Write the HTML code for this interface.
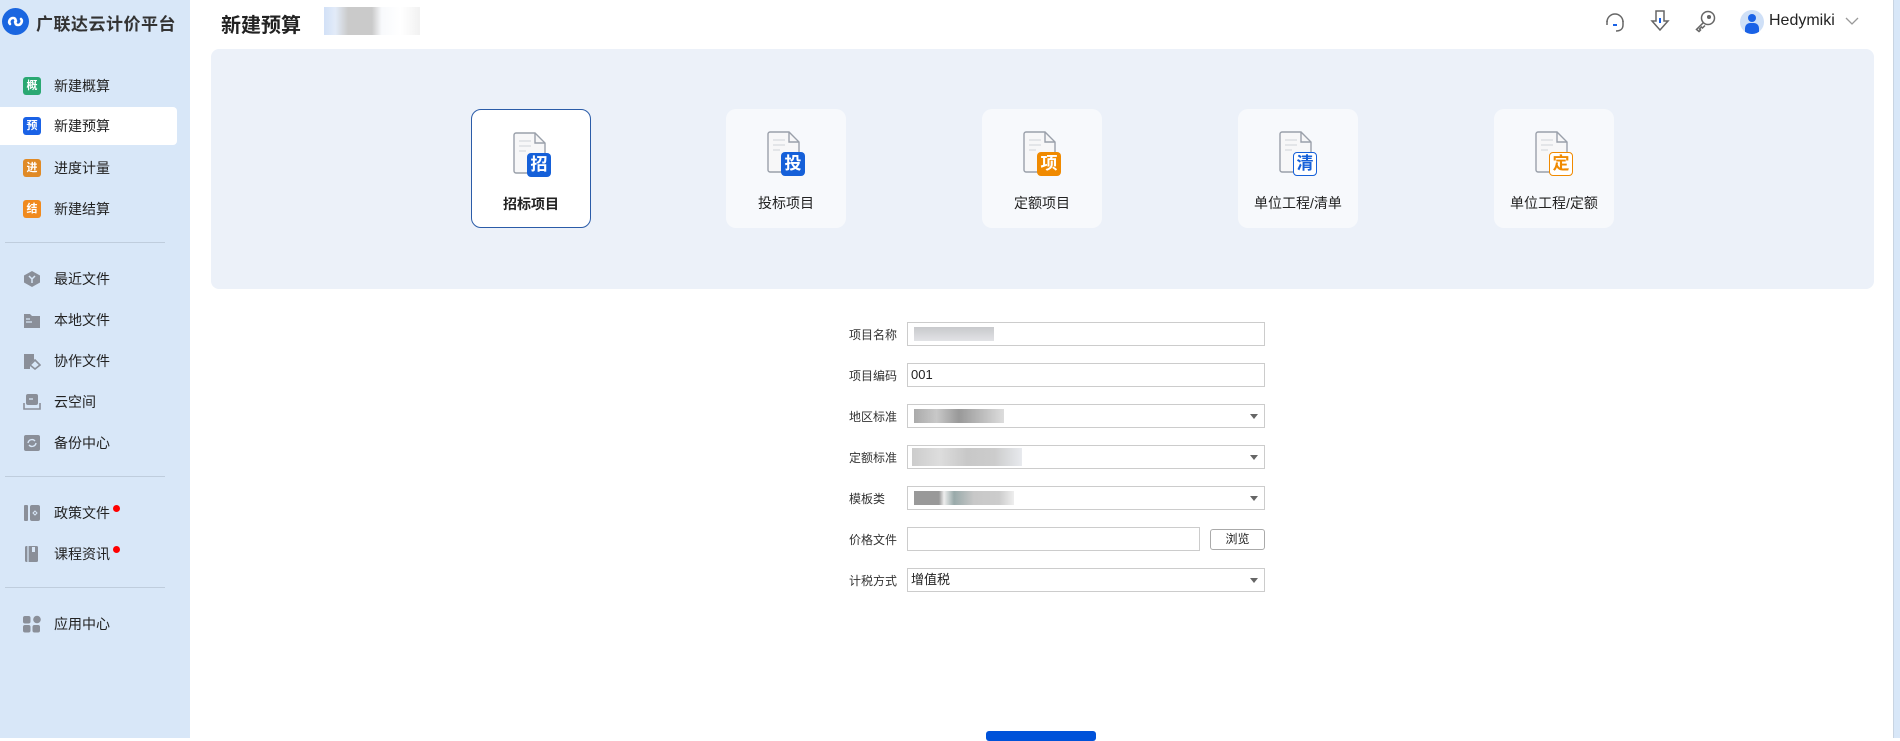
<!DOCTYPE html>
<html><head><meta charset="utf-8">
<style>
*{margin:0;padding:0;box-sizing:border-box}
body{width:1900px;height:738px;overflow:hidden;background:#fff;font-family:"Liberation Sans","Noto Sans CJK SC",sans-serif;position:relative;color:#222}
.abs{position:absolute}
#side{left:0;top:0;width:190px;height:738px;background:#d8e7f8}
.logo{left:2px;top:8px;width:27px;height:27px;border-radius:50%;background:#1a66e0}
.brand{left:36px;top:10px;font-size:17px;font-weight:bold;color:#333;letter-spacing:0.5px}
.mi{position:absolute;left:0;width:177px;height:38px;display:flex;align-items:center}
.mi .ic{position:absolute;left:23px;width:18px;height:18px;border-radius:3px;color:#fff;font-size:11px;font-weight:bold;text-align:center;line-height:18px}
.mi .tx{position:absolute;left:54px;font-size:14px;color:#222}
.mi svg{position:absolute;left:23px}
.dot{position:absolute;width:7px;height:7px;border-radius:50%;background:#f00}
.div{position:absolute;left:5px;width:160px;height:1px;background:#bfcddd}
.title{left:221px;top:9px;font-size:20px;font-weight:bold;color:#222}
.blur{left:324px;top:7px;width:96px;height:28px;background:linear-gradient(90deg,#c7d9f5 0,#dbe6f6 12%,#bdbdbd 25%,#bdbdbd 50%,#f6f8fb 60%,#fff 80%,#eee 100%);opacity:.8}
#panel{left:211px;top:49px;width:1663px;height:240px;background:#ecf1f9;border-radius:8px}
.card{position:absolute;top:109px;width:120px;height:119px;border-radius:10px;background:#f7f9fc}
.card.act{background:#fff;border:1px solid #2b5ca8}
.card svg{position:absolute;left:41px;top:22px}
.badge{position:absolute;left:55px;top:43px;width:24px;height:24px;border-radius:4px;font-size:17px;font-weight:bold;text-align:center;line-height:24px}
.lab{position:absolute;left:0;width:100%;top:84px;text-align:center;font-size:14px;color:#222}
.row{position:absolute;left:849px;height:24px}
.row .l{position:absolute;left:0;top:4px;font-size:12px;color:#333;white-space:nowrap}
.inp{position:absolute;left:907px;width:358px;height:24px;border:1px solid #ccc;background:#fff;font-size:13px;line-height:22px;padding-left:3px}
.arr{position:absolute;right:6px;top:9px;width:0;height:0;border-left:4px solid transparent;border-right:4px solid transparent;border-top:5px solid #666}
.pix{position:absolute;top:4px;height:14px}
</style></head><body>
<div id="side" class="abs"></div>
<div class="abs logo"><svg width="27" height="27" viewBox="0 0 27 27"><path d="M8 16c-2-2 0-6 3-6s3 3 2 4M19 11c2 2 0 6-3 6s-3-3-2-4" stroke="#fff" stroke-width="2.6" fill="none" stroke-linecap="round"/></svg></div>
<div class="abs brand">广联达云计价平台</div>

<div class="mi" style="top:67px"><div class="ic" style="background:#2aa872">概</div><div class="tx">新建概算</div></div>
<div class="mi" style="top:107px;background:#fff;border-radius:0 4px 4px 0"><div class="ic" style="background:#1a62e6">预</div><div class="tx">新建预算</div></div>
<div class="mi" style="top:149px"><div class="ic" style="background:#e08a26">进</div><div class="tx">进度计量</div></div>
<div class="mi" style="top:190px"><div class="ic" style="background:#f08a1e">结</div><div class="tx">新建结算</div></div>
<div class="div" style="top:242px"></div>
<div class="mi" style="top:260px"><svg width="18" height="18"><path d="M9 1l8 4.5v7L9 17 1 12.5v-7z" fill="#8a8f99"/><path d="M6 6l3 3 3-3M9 9v4" stroke="#d8e7f8" stroke-width="1.5" fill="none"/></svg><div class="tx">最近文件</div></div>
<div class="mi" style="top:301px"><svg width="18" height="18"><path d="M1 3h6l2 2h8v12H1z" fill="#8a8f99"/><path d="M3 8h4M3 11h6" stroke="#d8e7f8" stroke-width="1.3"/></svg><div class="tx">本地文件</div></div>
<div class="mi" style="top:342px"><svg width="18" height="18"><path d="M1 2h10v6l-4 4v5H1z" fill="#8a8f99"/><path d="M12 8l5 5-5 4-5-4z" fill="none" stroke="#8a8f99" stroke-width="1.6"/></svg><div class="tx">协作文件</div></div>
<div class="mi" style="top:383px"><svg width="18" height="18"><rect x="3" y="1" width="12" height="11" rx="2" fill="#8a8f99"/><path d="M1 10v6h16v-6" fill="none" stroke="#8a8f99" stroke-width="1.6"/><path d="M6 6h4" stroke="#d8e7f8" stroke-width="1.3"/></svg><div class="tx">云空间</div></div>
<div class="mi" style="top:424px"><svg width="18" height="18"><rect x="1" y="1" width="16" height="16" rx="2" fill="#8a8f99"/><path d="M5 9a4 4 0 0 1 7-2M13 9a4 4 0 0 1-7 2" stroke="#d8e7f8" stroke-width="1.4" fill="none"/></svg><div class="tx">备份中心</div></div>
<div class="div" style="top:476px"></div>
<div class="mi" style="top:494px"><svg width="18" height="18"><rect x="1" y="1" width="4" height="16" rx="1" fill="#8a8f99"/><rect x="7" y="1" width="10" height="16" rx="2" fill="#8a8f99"/><path d="M12 7l2 2-2 2-2-2z" stroke="#d8e7f8" fill="none"/></svg><div class="tx">政策文件</div></div>
<div class="dot" style="left:113px;top:505px"></div>
<div class="mi" style="top:535px"><svg width="18" height="18"><rect x="2" y="1" width="13" height="16" rx="1.5" fill="#8a8f99"/><path d="M5 1v16" stroke="#d8e7f8" stroke-width="1.2"/><rect x="9" y="2" width="3" height="5" fill="#d8e7f8"/></svg><div class="tx">课程资讯</div></div>
<div class="dot" style="left:113px;top:546px"></div>
<div class="div" style="top:587px"></div>
<div class="mi" style="top:605px"><svg width="18" height="18"><rect x="0" y="1" width="7.5" height="7.5" rx="2" fill="#8a8f99"/><circle cx="14" cy="4.5" r="3.8" fill="#8a8f99"/><rect x="0" y="10" width="7.5" height="7.5" rx="2" fill="#8a8f99"/><rect x="9.5" y="10" width="7.5" height="7.5" rx="2" fill="#8a8f99"/></svg><div class="tx">应用中心</div></div>

<div class="abs title">新建预算</div>
<div class="abs blur"></div>

<svg class="abs" style="left:1603px;top:10px" width="24" height="24" viewBox="0 0 24 24" fill="none" stroke="#666" stroke-width="1.5"><path d="M4 12a8 8 0 0 1 16 0"/><path d="M4 11v4M20 11v4"/><path d="M20 15c0 4-3 6-7 6"/><path d="M10 15h4" stroke="#1a62e6" stroke-width="2"/></svg>
<svg class="abs" style="left:1649px;top:9px" width="22" height="24" viewBox="0 0 22 24" fill="none" stroke="#666" stroke-width="1.5"><path d="M7 2h8v10h4l-8 9-8-9h4z"/><path d="M11 9v5" stroke="#1a62e6" stroke-width="2"/></svg>
<svg class="abs" style="left:1693px;top:9px" width="24" height="24" viewBox="0 0 24 24" fill="none" stroke="#666" stroke-width="1.5"><circle cx="15" cy="9" r="6.5"/><circle cx="16" cy="8" r="1.3" fill="#666"/><path d="M10.5 13.5l-7 7 2.5 2 1.5-1.5-1-1 2-2 1 1 2.5-2.5"/></svg>
<div class="abs" style="left:1740px;top:10px;width:24px;height:24px;border-radius:50%;background:#cfe0f7;overflow:hidden"><div class="abs" style="left:8px;top:4px;width:8px;height:8px;border-radius:50%;background:#1a62e6"></div><div class="abs" style="left:5px;top:13px;width:14px;height:12px;border-radius:5px 5px 0 0;background:#1a62e6"></div></div>
<div class="abs" style="left:1769px;top:12px;font-size:16px;color:#222">Hedymiki</div>
<svg class="abs" style="left:1845px;top:17px" width="14" height="9"><path d="M1 1l6 6 6-6" stroke="#999" stroke-width="1.3" fill="none"/></svg>

<div id="panel" class="abs"></div>
<div class="card act" style="left:471px"><svg width="33" height="42"><path d="M3 1h19l10 10v28a2 2 0 0 1-2 2H3a2 2 0 0 1-2-2V3a2 2 0 0 1 2-2z" fill="#f7f7f8" stroke="#9aa0aa" stroke-width="1.4"/><path d="M22 1v10h10" fill="none" stroke="#9aa0aa" stroke-width="1.4"/><path d="M6 9h12M6 14h12M6 19h7" stroke="#e3e5e8" stroke-width="2"/></svg><div class="badge" style="background:#1560d9;color:#fff">招</div><div class="lab" style="font-weight:bold">招标项目</div></div>
<div class="card" style="left:726px"><svg width="33" height="42"><path d="M3 1h19l10 10v28a2 2 0 0 1-2 2H3a2 2 0 0 1-2-2V3a2 2 0 0 1 2-2z" fill="#f7f7f8" stroke="#9aa0aa" stroke-width="1.4"/><path d="M22 1v10h10" fill="none" stroke="#9aa0aa" stroke-width="1.4"/><path d="M6 9h12M6 14h12M6 19h7" stroke="#e3e5e8" stroke-width="2"/></svg><div class="badge" style="background:#1560d9;color:#fff">投</div><div class="lab">投标项目</div></div>
<div class="card" style="left:982px"><svg width="33" height="42"><path d="M3 1h19l10 10v28a2 2 0 0 1-2 2H3a2 2 0 0 1-2-2V3a2 2 0 0 1 2-2z" fill="#f7f7f8" stroke="#9aa0aa" stroke-width="1.4"/><path d="M22 1v10h10" fill="none" stroke="#9aa0aa" stroke-width="1.4"/><path d="M6 9h12M6 14h12M6 19h7" stroke="#e3e5e8" stroke-width="2"/></svg><div class="badge" style="background:#f08a00;color:#fff">项</div><div class="lab">定额项目</div></div>
<div class="card" style="left:1238px"><svg width="33" height="42"><path d="M3 1h19l10 10v28a2 2 0 0 1-2 2H3a2 2 0 0 1-2-2V3a2 2 0 0 1 2-2z" fill="#f7f7f8" stroke="#9aa0aa" stroke-width="1.4"/><path d="M22 1v10h10" fill="none" stroke="#9aa0aa" stroke-width="1.4"/><path d="M6 9h12M6 14h12M6 19h7" stroke="#e3e5e8" stroke-width="2"/></svg><div class="badge" style="background:#fff;color:#1560d9;border:1.5px solid #1560d9;line-height:21px">清</div><div class="lab">单位工程/清单</div></div>
<div class="card" style="left:1494px"><svg width="33" height="42"><path d="M3 1h19l10 10v28a2 2 0 0 1-2 2H3a2 2 0 0 1-2-2V3a2 2 0 0 1 2-2z" fill="#f7f7f8" stroke="#9aa0aa" stroke-width="1.4"/><path d="M22 1v10h10" fill="none" stroke="#9aa0aa" stroke-width="1.4"/><path d="M6 9h12M6 14h12M6 19h7" stroke="#e3e5e8" stroke-width="2"/></svg><div class="badge" style="background:#fff;color:#f08a00;border:1.5px solid #f08a00;line-height:21px">定</div><div class="lab">单位工程/定额</div></div>

<div class="row" style="top:322px"><div class="l">项目名称</div></div>
<div class="inp" style="top:322px"><div class="pix" style="left:6px;width:80px;background:linear-gradient(#c8c9cc,#e2e3e6)"></div></div>
<div class="row" style="top:363px"><div class="l">项目编码</div></div>
<div class="inp" style="top:363px">001</div>
<div class="row" style="top:404px"><div class="l">地区标准</div></div>
<div class="inp" style="top:404px"><div class="pix" style="left:6px;width:90px;background:linear-gradient(90deg,#aaa,#c8c8c8,#999,#bbb,#ddd)"></div><div class="arr"></div></div>
<div class="row" style="top:445px"><div class="l">定额标准</div></div>
<div class="inp" style="top:445px"><div class="pix" style="left:4px;width:110px;height:18px;top:2px;background:linear-gradient(90deg,#ccc,#ddd,#c8c8c8,#ccc,#e8eaee)"></div><div class="arr"></div></div>
<div class="row" style="top:486px"><div class="l">模板类</div></div>
<div class="inp" style="top:486px"><div class="pix" style="left:6px;width:100px;background:linear-gradient(90deg,#999 0,#999 25%,#eee 30%,#9aa 40%,#c8c8c8 60%,#ccc 85%,#eee)"></div><div class="arr"></div></div>
<div class="row" style="top:527px"><div class="l">价格文件</div></div>
<div class="inp" style="top:527px;width:293px"></div>
<div class="abs" style="left:1210px;top:529px;width:55px;height:21px;border:1px solid #aaa;border-radius:3px;background:#fff;font-size:12px;text-align:center;line-height:19px">浏览</div>
<div class="row" style="top:568px"><div class="l">计税方式</div></div>
<div class="inp" style="top:568px">增值税<div class="arr"></div></div>

<div class="abs" style="left:986px;top:731px;width:110px;height:10px;background:#0052d9;border-radius:3px"></div>
<div class="abs" style="left:1893px;top:0;width:7px;height:738px;background:#d8e7f8;border-left:1px solid #c8d4e2"></div>
</body></html>
